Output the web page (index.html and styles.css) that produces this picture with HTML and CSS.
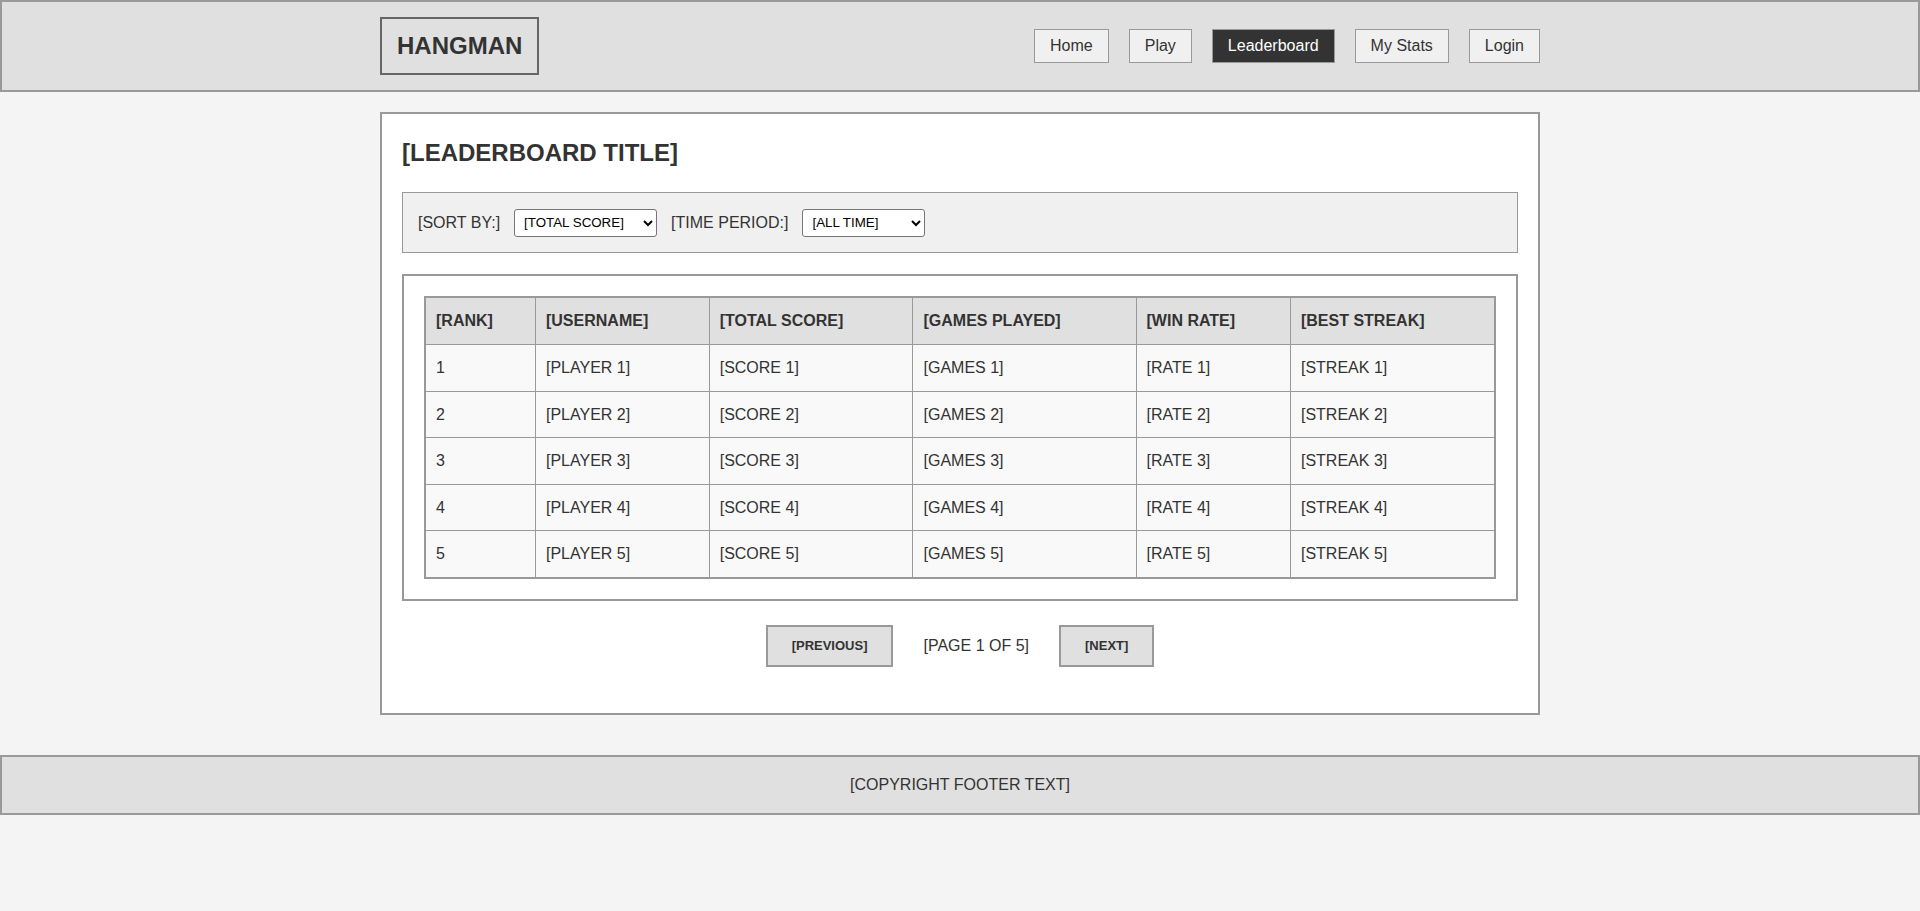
FILE: index.html
```html
<!DOCTYPE html>
<html lang="en">
<head>
<meta charset="utf-8">
<title>Hangman - Leaderboard</title>
<link rel="stylesheet" href="styles.css">
</head>
<body>
<header class="site-header">
  <div class="header-inner">
    <div class="logo">HANGMAN</div>
    <nav class="nav">
      <a class="nav-link" href="#">Home</a>
      <a class="nav-link" href="#">Play</a>
      <a class="nav-link active" href="#">Leaderboard</a>
      <a class="nav-link" href="#">My Stats</a>
      <a class="nav-link" href="#">Login</a>
    </nav>
  </div>
</header>

<main class="container">
  <section class="card">
    <h2 class="card-title">[LEADERBOARD TITLE]</h2>

    <div class="filters">
      <label class="filter-label" for="sort">[SORT BY:]</label>
      <select id="sort" class="select select-sort">
        <option>[TOTAL SCORE]</option>
        <option>[WIN RATE]</option>
        <option>[GAMES PLAYED]</option>
      </select>
      <label class="filter-label" for="period">[TIME PERIOD:]</label>
      <select id="period" class="select select-period">
        <option>[ALL TIME]</option>
        <option>[THIS WEEK]</option>
      </select>
    </div>

    <div class="table-wrap">
      <table class="board">
        <thead>
          <tr>
            <th>[RANK]</th>
            <th>[USERNAME]</th>
            <th>[TOTAL SCORE]</th>
            <th>[GAMES PLAYED]</th>
            <th>[WIN RATE]</th>
            <th>[BEST STREAK]</th>
          </tr>
        </thead>
        <tbody>
          <tr><td>1</td><td>[PLAYER 1]</td><td>[SCORE 1]</td><td>[GAMES 1]</td><td>[RATE 1]</td><td>[STREAK 1]</td></tr>
          <tr><td>2</td><td>[PLAYER 2]</td><td>[SCORE 2]</td><td>[GAMES 2]</td><td>[RATE 2]</td><td>[STREAK 2]</td></tr>
          <tr><td>3</td><td>[PLAYER 3]</td><td>[SCORE 3]</td><td>[GAMES 3]</td><td>[RATE 3]</td><td>[STREAK 3]</td></tr>
          <tr><td>4</td><td>[PLAYER 4]</td><td>[SCORE 4]</td><td>[GAMES 4]</td><td>[RATE 4]</td><td>[STREAK 4]</td></tr>
          <tr><td>5</td><td>[PLAYER 5]</td><td>[SCORE 5]</td><td>[GAMES 5]</td><td>[RATE 5]</td><td>[STREAK 5]</td></tr>
        </tbody>
      </table>
    </div>

    <div class="pagination">
      <button class="page-btn" type="button">[PREVIOUS]</button>
      <span class="page-info">[PAGE 1 OF 5]</span>
      <button class="page-btn" type="button">[NEXT]</button>
    </div>
  </section>
</main>

<footer class="site-footer">[COPYRIGHT FOOTER TEXT]</footer>
</body>
</html>
```

FILE: styles.css
```css
* {
  box-sizing: border-box;
}

html, body {
  margin: 0;
  padding: 0;
}

body {
  background: #f4f4f4;
  color: #333;
  font-family: "Liberation Sans", Arial, sans-serif;
  font-size: 16px;
  line-height: 1.6;
  min-height: 911px;
}

/* Header */
.site-header {
  background: #e0e0e0;
  border: 2px solid #999;
}

.header-inner {
  width: 1160px;
  margin: 0 auto;
  padding: 15px 0;
  display: flex;
  align-items: center;
  justify-content: space-between;
}

.logo {
  border: 2px solid #666;
  padding: 13px 15px;
  font-size: 24px;
  font-weight: bold;
  line-height: 28px;
  color: #333;
}

.nav {
  display: flex;
  gap: 20px;
}

.nav-link {
  display: block;
  padding: 7px 15px;
  line-height: 18px;
  font-size: 16px;
  color: #333;
  background: #f0f0f0;
  border: 1px solid #999;
  text-decoration: none;
}

.nav-link.active {
  background: #333;
  color: #fff;
}

/* Main */
.container {
  width: 1160px;
  margin: 20px auto 40px;
}

.card {
  background: #fff;
  border: 2px solid #999;
  padding: 20px;
}

.card-title {
  margin: 0 0 20px;
  font-size: 24px;
  font-weight: bold;
  line-height: 1.6;
  color: #333;
}

.filters {
  display: flex;
  align-items: center;
  background: #f0f0f0;
  border: 1px solid #999;
  padding: 15px;
  height: 61px;
}

.filter-label {
  margin-right: 14px;
}

.select {
  height: 28px;
  padding: 4px 5px;
  font-family: "Liberation Sans", Arial, sans-serif;
  font-size: 13.33px;
  color: #000;
  background: #fff;
  border: 1px solid #767676;
  border-radius: 3px;
  margin-right: 14px;
}

.select-sort {
  width: 143px;
}

.select-period {
  width: 123px;
}

.table-wrap {
  margin-top: 21px;
  border: 2px solid #999;
  padding: 20px;
}

.board {
  width: 100%;
  border-collapse: collapse;
  border: 2px solid #999;
}

.board th,
.board td {
  border: 1px solid #999;
  padding: 10px;
  text-align: left;
  line-height: 1.6;
}

.board th {
  background: #e0e0e0;
  font-weight: bold;
  color: #333;
}

.board td {
  background: #f9f9f9;
  color: #333;
}

.pagination {
  display: flex;
  justify-content: center;
  align-items: center;
  gap: 30px;
  margin: 24px 0 26px;
}

.page-btn {
  font-family: "Liberation Sans", Arial, sans-serif;
  font-size: 13px;
  font-weight: bold;
  line-height: 18px;
  color: #333;
  background: #e0e0e0;
  border: 2px solid #999;
  padding: 10px 24px;
  cursor: pointer;
}

.page-info {
  font-size: 16px;
}

/* Footer */
.site-footer {
  background: #e0e0e0;
  border: 2px solid #999;
  padding: 15px;
  text-align: center;
  line-height: 1.6;
}
```
